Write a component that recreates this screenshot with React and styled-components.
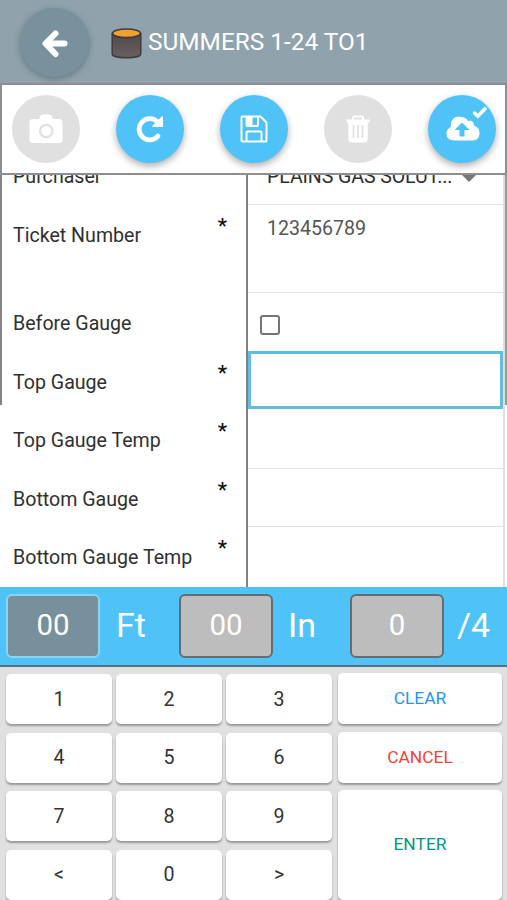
import { useState } from "react";
import styled, { createGlobalStyle } from "styled-components";

const GlobalStyle = createGlobalStyle`
  * {
    box-sizing: border-box;
  }
  body {
    margin: 0;
    overflow: hidden;
    font-family: Roboto, sans-serif;
    color: #333;
    background: #fff;
  }
  button, input {
    font-family: inherit;
  }
`;

const Screen = styled.div`
  width: 507px;
  height: 900px;
  overflow: hidden;
  display: flex;
  flex-direction: column;
`;

const Header = styled.header`
  height: 83px;
  flex: none;
  display: flex;
  align-items: center;
  padding: 2px 0 0 20px;
  background: #90a3ad;
`;

const RoundButton = styled.button`
  width: 68px;
  height: 68px;
  flex: none;
  padding: 0;
  border: none;
  border-radius: 50%;
  display: flex;
  justify-content: center;
  align-items: center;
  color: #fff;
  background: ${(props) => (props.disabled ? "#e0e0e0" : "#4fc3f7")};
  box-shadow: ${(props) =>
    props.disabled ? "none" : "0 3px 7px rgba(0, 0, 0, 0.32)"};
  & > svg {
    display: block;
  }
`;

const BackButton = styled(RoundButton)`
  width: 69px;
  height: 69px;
  background: #78919d;
  box-shadow: 0 2px 7px rgba(0, 0, 0, 0.28);
`;

const TankIcon = styled.svg`
  margin: 2px 0 0 22px;
`;

const Title = styled.h1`
  margin: -1px 0 0 6px;
  font-size: 24.4px;
  line-height: 30px;
  font-weight: 400;
  color: #fff;
`;

const Toolbar = styled.div`
  height: 92px;
  flex: none;
  display: flex;
  justify-content: space-between;
  align-items: center;
  padding: 0 9px 0 10px;
  border: 2px solid #8b8f91;
  background: #fff;
`;

const Form = styled.div`
  height: 412px;
  flex: none;
  display: flex;
  overflow: hidden;
`;

const SideBorder = styled.div`
  width: 2px;
  height: 230px;
  background: ${(props) => (props.$right ? "#999" : "#858585")};
`;

const Fields = styled.div`
  width: 503px;
  margin-top: -28.6px;
  display: flex;
  flex-direction: column;
  border-right: 2px solid #e0e0e0;
`;

const FieldRow = styled.div`
  height: ${(props) => (props.$tall ? "88px" : "58.6px")};
  flex: none;
  display: flex;
  &:last-child {
    height: 61px;
  }
`;

const Label = styled.label`
  width: 246px;
  display: flex;
  justify-content: space-between;
  padding: 17px 19px 0 11px;
  border-right: 2px solid #808080;
  font-size: 19.6px;
  line-height: 28px;
  color: #303030;
`;

const Required = styled.span`
  margin-top: -10px;
  font-size: 21px;
  font-weight: 500;
  color: #111;
`;

const Value = styled.div`
  flex: 1;
  padding: 10px 19px 0;
  border-bottom: 1.5px solid #e2e2e2;
  font-size: 19.6px;
  line-height: 28px;
  color: #555;
  ${(props) =>
    props.$focused
      ? "border: 3px solid #62bde3; margin: -1px 0 1px;"
      : ""}
`;

const Select = styled.div`
  display: flex;
  align-items: center;
  justify-content: space-between;
  padding: 7px 8px 0 0;
  color: #303030;
  letter-spacing: -0.1px;
`;

const Caret = styled.span`
  margin-top: 2px;
  border: 7px solid transparent;
  border-top-color: #777;
  border-bottom: none;
`;

const Checkbox = styled.input`
  appearance: none;
  display: block;
  width: 20px;
  height: 20px;
  margin: 12px 0 0 -7px;
  border: 2px solid #757575;
  border-radius: 3px;
`;

const Readout = styled.div`
  height: 80px;
  flex: none;
  display: flex;
  padding: 7px 0 0 6px;
  background: #4fc3f7;
  border-bottom: 2px solid #54727f;
`;

const Digits = styled.div`
  width: 94px;
  height: 64px;
  border: 2px solid ${(props) => (props.$active ? "#8ed2f2" : "#666d70")};
  border-radius: 6px;
  background: ${(props) => (props.$active ? "#78909c" : "#bdbdbd")};
  color: #fff;
  font-size: 29.5px;
  line-height: 58px;
  text-align: center;
`;

const Unit = styled.div`
  width: ${(props) => props.$width}px;
  padding-left: ${(props) => props.$indent}px;
  color: #fff;
  font-size: 34px;
  line-height: 63px;
`;

const Keypad = styled.div`
  flex: 1;
  display: grid;
  grid-template-columns: 106px 106px 106px 164px;
  grid-template-rows: repeat(4, 50px);
  column-gap: 4px;
  row-gap: 8.6px;
  padding: 7px 0 0 6px;
  background: #e0e0e0;
`;

const Key = styled.button`
  padding: 0;
  border: none;
  border-radius: 5px;
  background: #fff;
  box-shadow: 0 2px 2px rgba(0, 0, 0, 0.32);
  color: #333;
  font-size: 19.6px;
`;

const ActionKey = styled(Key)`
  grid-column: 4;
  grid-row: ${(props) => props.$row};
  margin: -1px -2px 0 2px;
  padding-bottom: 1px;
  font-size: 17.4px;
  color: ${(props) => props.$color};
`;

const fields = [
  { label: "Purchaser", type: "select", value: "PLAINS GAS SOLUT..." },
  { label: "Ticket Number", required: true, tall: true, value: "123456789" },
  { label: "Before Gauge", type: "checkbox" },
  { label: "Top Gauge", required: true },
  { label: "Top Gauge Temp", required: true },
  { label: "Bottom Gauge", required: true },
  { label: "Bottom Gauge Temp", required: true },
];

const keys = ["1", "2", "3", "4", "5", "6", "7", "8", "9", "<", "0", ">"];

const ArrowIcon = () => (
  <svg width="28" height="30" viewBox="0 0 28 30" fill="none">
    <path
      d="M14.5 5.5 4.5 15.500 14.5 26M5 15.500H23.5"
      stroke="#fff"
      strokeWidth="6"
      strokeLinecap="round"
      strokeLinejoin="round"
    />
  </svg>
);

const CameraIcon = () => (
  <svg width="34" height="30" viewBox="0 0 34 30">
    <path
      d="M4 5h6l1.3-3Q12 .5 13.5.5h7Q22 .5 22.7 2L24 5h6q3.5 0 3.5 3.5v17q0 3.5-3.5 3.5H4Q.5 29 .5 25.5v-17Q.5 5 4 5Z"
      fill="#fff"
    />
    <circle cx="17.3" cy="17" r="6.2" fill="#fff" stroke="#e0e0e0" strokeWidth="2.2" />
  </svg>
);

const RefreshIcon = () => (
  <svg width="28" height="28" viewBox="0 0 28 28">
    <path
      d="M22 21A10.600 10.600 0 1 1 21 6.500"
      fill="none"
      stroke="#fff"
      strokeWidth="4.800"
      strokeLinecap="round"
    />
    <path d="M26.300 2v9.300H17Z" fill="#fff" stroke="#fff" strokeWidth="1.500" strokeLinejoin="round" />
  </svg>
);

const SaveIcon = () => (
  <svg width="28" height="28" viewBox="0 0 28 28" fill="none" stroke="#fff">
    <path
      d="M2.500 1.5H20.500l6 6V25.500q0 1-1 1H2.500q-1 0-1-1V2.500q0-1 1-1Z"
      strokeWidth="2"
      strokeLinejoin="round"
    />
    <path d="M6.500 2v8q0 1 1 1h9.500q1 0 1-1V2M6.500 26v-8.500q0-1 1-1h13q1 0 1 1V26" strokeWidth="2" />
    <path d="M7 1h5.500v10H7Z" fill="#fff" stroke="none" />
  </svg>
);

const TrashIcon = () => (
  <svg width="26" height="28" viewBox="0 0 26 28">
    <path d="M8 5V3q0-1.5 1.5-1.5h7Q18 1.500 18 3v2" fill="none" stroke="#fff" strokeWidth="2" />
    <path
      d="M1.500 4.5h23v3h-1.800V24q0 3.500-3.500 3.500H6.800Q3.300 27.500 3.300 24V7.500H1.500Z"
      fill="#fff"
    />
    <path d="M8.500 10v13M13 10v13M17.500 10v13" stroke="#e0e0e0" strokeWidth="1.800" />
  </svg>
);

const UploadIcon = () => (
  <svg width="68" height="68" viewBox="0 0 68 68">
    <path
      d="M26.500 45.500Q18.500 45.500 18.500 38.500q0-5 4.500-6.500-1-5 2.500-8.500 3.500-3 8-1.500 5 .5 6.500 4.100 6-1.500 6 4.400 5.500 2 5.500 7.500 0 7.500-7 7.500Z"
      fill="#fff"
    />
    <path d="m34 27.500-7.500 7.500h5v6.500h5V35h5Z" fill="#4fc3f7" />
    <path
      d="m46.500 18 3.300 3.300 7.200-7.500"
      fill="none"
      stroke="#fff"
      strokeWidth="3.500"
      strokeLinecap="round"
    />
  </svg>
);

const Tank = () => (
  <TankIcon width="31" height="31" viewBox="0 0 31 31">
    <defs>
      <linearGradient id="steel" x2="0" y2="1">
        <stop stopColor="#514849" />
        <stop offset="1" stopColor="#695f60" />
      </linearGradient>
    </defs>
    <path
      d="M1.200 5v21c0 5 28.600 5 28.600 0V5"
      fill="url(#steel)"
      stroke="#443a3b"
      strokeWidth="1.500"
    />
    <ellipse cx="15.500" cy="5.300" rx="14" ry="4.300" fill="#f0a132" stroke="#443a3b" strokeWidth="1.700" />
  </TankIcon>
);

function renderValue(field) {
  if (field.type === "select") {
    return (
      <Select>
        {field.value}
        <Caret />
      </Select>
    );
  }
  if (field.type === "checkbox") return <Checkbox type="checkbox" />;
  return field.value;
}

export default function App() {
  const [focused, setFocused] = useState("Top Gauge");

  return (
    <Screen>
      <GlobalStyle />
      <Header>
        <BackButton aria-label="Back">
          <ArrowIcon />
        </BackButton>
        <Tank />
        <Title>SUMMERS 1-24 TO1</Title>
      </Header>

      <Toolbar>
        <RoundButton disabled>
          <CameraIcon />
        </RoundButton>
        <RoundButton>
          <RefreshIcon />
        </RoundButton>
        <RoundButton>
          <SaveIcon />
        </RoundButton>
        <RoundButton disabled>
          <TrashIcon />
        </RoundButton>
        <RoundButton>
          <UploadIcon />
        </RoundButton>
      </Toolbar>

      <Form>
        <SideBorder />
        <Fields>
          {fields.map((field) => (
            <FieldRow key={field.label} $tall={field.tall}>
              <Label>
                {field.label}
                {field.required && <Required>*</Required>}
              </Label>
              <Value
                $focused={field.label === focused}
                onClick={() => setFocused(field.label)}
              >
                {renderValue(field)}
              </Value>
            </FieldRow>
          ))}
        </Fields>
        <SideBorder $right />
      </Form>

      <Readout>
        <Digits $active>00</Digits>
        <Unit $width={79} $indent={16}>
          Ft
        </Unit>
        <Digits>00</Digits>
        <Unit $width={77} $indent={15}>
          In
        </Unit>
        <Digits>0</Digits>
        <Unit $width={60} $indent={13}>
          /4
        </Unit>
      </Readout>

      <Keypad>
        {keys.map((key) => (
          <Key key={key}>{key}</Key>
        ))}
        <ActionKey $row="1" $color="#2196f3">
          CLEAR
        </ActionKey>
        <ActionKey $row="2" $color="#f44336">
          CANCEL
        </ActionKey>
        <ActionKey $row="3 / 5" $color="#009688">
          ENTER
        </ActionKey>
      </Keypad>
    </Screen>
  );
}
